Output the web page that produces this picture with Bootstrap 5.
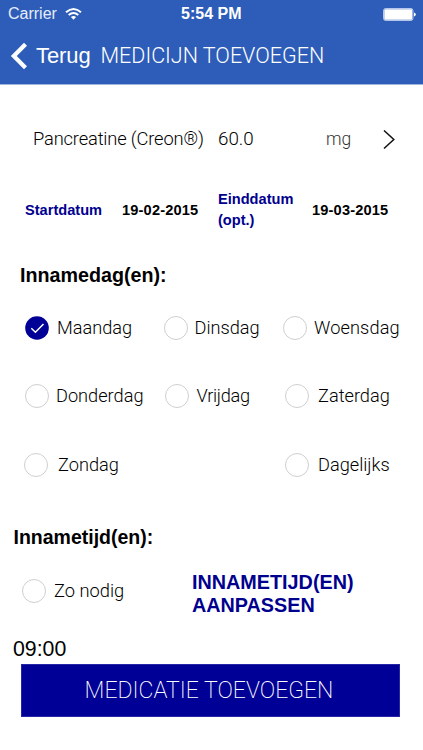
<!DOCTYPE html>
<html lang="nl">
<head>
<meta charset="utf-8">
<meta name="viewport" content="width=device-width, initial-scale=1">
<title>Medicijn toevoegen</title>
<link rel="stylesheet" href="https://cdn.jsdelivr.net/npm/bootstrap@5.3.0/dist/css/bootstrap.min.css">
<style>
body{font-family:"Liberation Sans",Arial,sans-serif;color:#000;background:#fff;height:750px;overflow:hidden}
.app-head{background:#2d5db9;height:85px;border-bottom:1px solid #9fb4dd;color:#fff}
.status{height:28px;padding:0 7px 0 8px;font-size:16px;line-height:28px;display:grid;grid-template-columns:173px 1fr auto}
.status .carrier{color:#e6edfa}
.status svg,.title-bar svg{display:block}
.title-bar{height:56px;padding-left:10px}
.back{font-size:22px;line-height:56px;margin-left:8px;width:64.5px;letter-spacing:-.1px}
.thin{font-family:Roboto,"Liberation Sans",sans-serif;font-weight:300}
.title-text{font-size:21.5px;padding-top:1px}
.drug{display:grid;grid-template-columns:185px 108px 57px auto;padding-left:33px;height:28px;margin-top:40px;font-size:18.5px;line-height:28px}
.drug .drug-name{font-size:18.3px;letter-spacing:-.15px;line-height:27px}
.drug .amount{font-size:18.8px;line-height:29px}
.unit{color:#333;font-size:17.5px}
.dates{display:grid;grid-template-columns:97px 96px 94px auto;padding-left:25px;margin-top:36px;height:42px;font-size:14.6px;font-weight:700;line-height:21px}
.navy{color:#00008f}
.date-value{letter-spacing:.17px}
.group-title{font-size:19.7px;font-weight:700;line-height:24px;margin:32px 0 0;padding-left:20px}
.times-title{font-size:19.5px;padding-left:13.5px;margin-top:48px}
.days{margin-top:28.5px}
.day-row{display:grid;height:24px;font-size:18.2px;line-height:24px}
.day-row + .day-row{margin-top:44.5px}
.r-one{grid-template-columns:32px 107px 30.5px 88.5px 31px auto;padding-left:25px}
.r-one span:last-child{letter-spacing:.12px}
.r-two{grid-template-columns:31.5px 109px 31.5px 88.5px 33px auto;padding-left:24.5px}
.r-two span:nth-of-type(2){letter-spacing:-.3px}
.r-three{grid-template-columns:34px 227px 33px auto;padding-left:24px}
.ring{appearance:none;width:24px;height:24px;border:1.3px solid #cfcfd3;border-radius:50%;margin:0;background:#fff}
.tick{display:block}
.when{margin-top:22px;padding-left:22px;height:46px}
.when .ring{margin-top:8.5px}
.when-label{font-size:18.3px;line-height:24px;margin:8px 0 0 8px;width:138px}
.adjust{font-size:19.8px;font-weight:700;line-height:23px;color:#00008f;text-decoration:none}
.time{font-size:21.3px;line-height:24px;padding-left:13px;margin-top:20px}
.submit,.submit:hover{display:block;width:379px;height:53px;margin:3px 0 0 21px;padding:0 3px 0 0;border:1px solid #2525a5;border-radius:0;background:#000096;color:#fff;font-weight:200;font-size:23px;line-height:51px}
</style>
</head>
<body>
<header class="app-head">
  <div class="status">
    <div class="carrier d-flex align-items-center">Carrier
      <svg class="ms-2" width="17" height="13" viewBox="0 0 17 13" fill="none" stroke="#fff" stroke-width="2"><path d="M1 4.300Q8.500-2.200 16 4.300M3.700 7.100Q8.500 2.800 13.300 7.100"/><path d="M5.900 9.100Q8.500 6.900 11.100 9.100L8.500 11.700Z" fill="#fff" stroke="none"/></svg>
    </div>
    <div class="fw-bold">5:54 PM</div>
    <svg class="align-self-center" width="33" height="13" viewBox="0 0 33 13"><rect x=".6" y=".6" width="29.300" height="11.800" rx="1.800" fill="none" stroke="#c4d2ef"/><rect x="1.300" y="1.300" width="27.900" height="10.400" rx=".7" fill="#fff"/><path d="M31 4.500Q32.800 4.800 32.800 6.500T31 8.500Z" fill="#fff"/></svg>
  </div>
  <div class="title-bar d-flex align-items-center">
    <svg width="18" height="28" viewBox="0 0 18 28" fill="none" stroke="#fff" stroke-width="4.200"><path d="M15.500 2.200L3.800 14L15.500 25.800"/></svg>
    <div class="back">Terug</div>
    <div class="thin title-text">MEDICIJN TOEVOEGEN</div>
  </div>
</header>
<main>
  <section class="drug thin">
    <div class="drug-name text-nowrap">Pancreatine (Creon®)</div>
    <div class="amount">60.0</div>
    <div class="unit">mg</div>
    <svg class="align-self-center" width="13" height="20" viewBox="0 0 13 20" fill="none" stroke="#111" stroke-width="1.500"><path d="M1 .5L10.800 9.500L1 18.500"/></svg>
  </section>
  <section class="dates align-items-center">
    <div class="navy">Startdatum</div>
    <div class="date-value">19-02-2015</div>
    <div class="navy">Einddatum<br>(opt.)</div>
    <div class="date-value">19-03-2015</div>
  </section>
  <h2 class="group-title">Innamedag(en):</h2>
  <section class="days thin">
    <div class="day-row r-one">
      <svg class="tick" width="24" height="24" viewBox="0 0 24 24"><circle cx="12" cy="12" r="11.800" fill="#000096"/><path d="M6.300 12.300L10.400 16.200L18.500 8" fill="none" stroke="#fff" stroke-width="1.500"/></svg>
      <span>Maandag</span><input class="ring" type="radio"><span>Dinsdag</span><input class="ring" type="radio"><span>Woensdag</span>
    </div>
    <div class="day-row r-two">
      <input class="ring" type="radio"><span>Donderdag</span><input class="ring" type="radio"><span>Vrijdag</span><input class="ring" type="radio"><span>Zaterdag</span>
    </div>
    <div class="day-row r-three">
      <input class="ring" type="radio"><span>Zondag</span><input class="ring" type="radio"><span>Dagelijks</span>
    </div>
  </section>
  <h2 class="group-title times-title">Innametijd(en):</h2>
  <section class="when d-flex align-items-start">
    <input class="ring" type="radio"><span class="thin when-label">Zo nodig</span>
    <a class="adjust" href="#">INNAMETIJD(EN)<br>AANPASSEN</a>
  </section>
  <div class="time">09:00</div>
  <button class="btn submit thin">MEDICATIE TOEVOEGEN</button>
</main>
<script src="https://cdn.jsdelivr.net/npm/bootstrap@5.3.0/dist/js/bootstrap.bundle.min.js"></script>
</body>
</html>
